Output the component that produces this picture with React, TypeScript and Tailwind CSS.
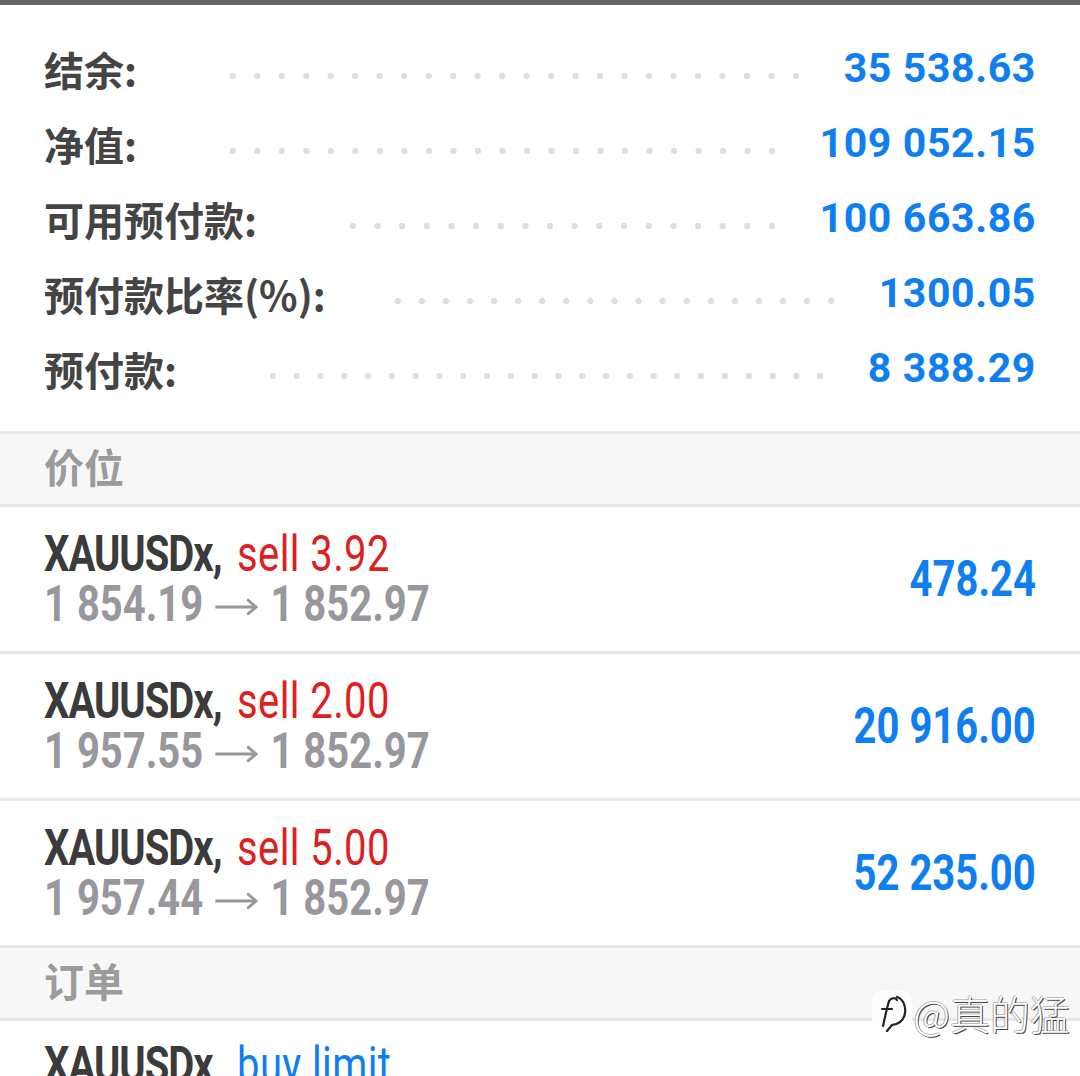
import React from 'react';

type AccountRow = { label: string; value: string; lead: string };
type Position = { side: string; open: string; profit: string };

const account: AccountRow[] = [
  { label: '结余:', value: '35 538.63', lead: 'ml-[84px] mr-[36px]' },
  { label: '净值:', value: '109 052.15', lead: 'ml-[84px] mr-[36px]' },
  { label: '可用预付款:', value: '100 663.86', lead: 'ml-[84px] mr-[36px]' },
  { label: '预付款比率(%):', value: '1300.05', lead: 'ml-[60px] mr-[36px]' },
  { label: '预付款:', value: '8 388.29', lead: 'ml-[84px] mr-[36px]' },
];

const positions: Position[] = [
  { side: 'sell 3.92', open: '1 854.19', profit: '478.24' },
  { side: 'sell 2.00', open: '1 957.55', profit: '20 916.00' },
  { side: 'sell 5.00', open: '1 957.44', profit: '52 235.00' },
];

const cjk = "font-['Noto_Sans_CJK_SC','Noto_Sans',sans-serif]";
const num = "font-['Roboto','Noto_Sans',sans-serif]";

function SectionHeader({ title }: { title: string }) {
  return (
    <div className="flex h-[76px] items-center border-y-[3px] border-[#e7e7e7] bg-[#f7f7f8] pl-[44px]">
      <span className={`${cjk} pb-[6px] text-[40px] font-semibold leading-none text-[#9b9b9b]`}>{title}</span>
    </div>
  );
}

function Leader({ className }: { className: string }) {
  return (
    <div
      className={`mt-[14px] h-[8px] flex-1 bg-[image:radial-gradient(circle,#dedede_2.9px,transparent_3.5px)] bg-[length:23.6px_8px] bg-repeat-space ${className}`}
    />
  );
}

function Arrow() {
  return (
    <svg width="54" height="20" viewBox="0 0 54 20" className="mx-[15px] inline-block align-[0.08em]" fill="none" stroke="#97979c" strokeWidth="3.2">
      <path d="M0 10h50" />
      <path d="M40 2.5l11 7.5-11 7.5" strokeLinejoin="miter" />
    </svg>
  );
}

export default function App() {
  return (
    <div className="relative h-[1076px] w-[1080px] overflow-hidden bg-white">
      <div className="h-[5px] bg-[#666]" />

      {/* Account summary */}
      <div className="px-[44px] pb-[25px] pt-[26px]">
        {account.map((r) => (
          <div key={r.label} className="flex h-[75px] items-center">
            <span className={`${cjk} whitespace-nowrap text-[40px] font-bold leading-none text-[#444]`}>{r.label}</span>
            <Leader className={r.lead} />
            <span className={`${num} whitespace-nowrap text-[41px] font-bold leading-none tracking-[0.015em] text-[#0f7eef]`}>
              {r.value}
            </span>
          </div>
        ))}
      </div>

      <SectionHeader title="价位" />

      {positions.map((p) => (
        <div key={p.open + p.side} className="flex h-[147px] items-center justify-between border-b-[3px] border-[#e7e7e7] px-[44px]">
          <div className={`${num} origin-left scale-x-[0.8] whitespace-nowrap text-[50px] leading-[50px]`}>
            <div>
              <span className="font-bold tracking-[-0.025em] text-[#3b3b3b]">XAUUSDx,</span>{' '}
              <span className="pl-[7px] tracking-[0.01em] text-[#dd1f1f]">{p.side}</span>
            </div>
            <div className="font-bold text-[#97979c]">
              {p.open}
              <Arrow />
              1 852.97
            </div>
          </div>
          <div className={`${num} origin-right scale-x-[0.8] whitespace-nowrap text-[50px] font-bold leading-none text-[#0f7eef]`}>
            {p.profit}
          </div>
        </div>
      ))}

      <div className="-mt-[3px]">
        <SectionHeader title="订单" />
      </div>

      <div className="flex h-[147px] items-start px-[44px] pt-[19px]">
        <div className={`${num} origin-left scale-x-[0.8] whitespace-nowrap text-[50px] leading-[50px]`}>
          <span className="font-bold tracking-[-0.025em] text-[#3b3b3b]">XAUUSDx,</span>{' '}
          <span className="pl-[7px] tracking-[0.01em] text-[#0f7eef]">buy limit</span>
        </div>
      </div>

      {/* watermark */}
      <div className="absolute right-[10px] top-[990px] flex items-center gap-[2px]">
        <div className="flex h-[46px] w-[40px] items-center justify-center rounded-[12px] bg-white/90">
          <svg width="34" height="42" viewBox="0 0 34 42" fill="none" stroke="#222" strokeWidth="2.2" strokeLinecap="round">
            <path d="M22 5c6 2 9 9 8 16-1 7-6 11-13 12l-5 6" />
            <path d="M14 9c-2 7-4 16-6 25" />
            <path d="M7 17h10" />
            <path d="M14 9c2-3 6-4 8-1" />
          </svg>
        </div>
        <span className={`${cjk} text-[40px] font-light leading-none text-white [text-shadow:1px_1px_0_#444,-1px_0_0_#aaa,0_-1px_0_#bbb]`}>
          @真的猛
        </span>
      </div>
    </div>
  );
}
